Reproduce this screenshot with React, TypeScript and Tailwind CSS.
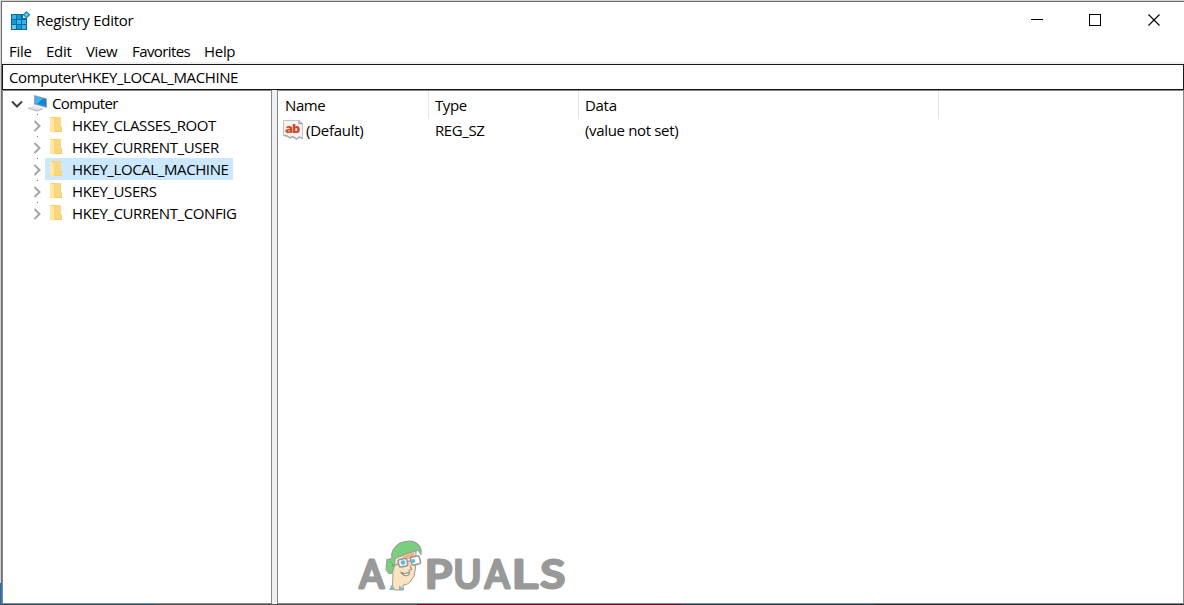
import React from 'react';

const menus = [
  { label: 'File', style: 'w-[37px] tracking-[-0.3px]' },
  { label: 'Edit', style: 'w-[40px] tracking-[-0.3px]' },
  { label: 'View', style: 'w-[46px] tracking-[-0.4px]' },
  { label: 'Favorites', style: 'w-[72px] tracking-[-0.6px]' },
  { label: 'Help', style: 'w-[40px] tracking-[-0.3px]' },
];

const keys = [
  { name: 'HKEY_CLASSES_ROOT' },
  { name: 'HKEY_CURRENT_USER' },
  { name: 'HKEY_LOCAL_MACHINE', selected: true },
  { name: 'HKEY_USERS' },
  { name: 'HKEY_CURRENT_CONFIG' },
];

const RegistryIcon = () => (
  <svg width="20" height="20" viewBox="0 0 20 20" className="shrink-0">
    <path d="M0 3h12v4h4v12H0z" fill="#08699f" />
    <path d="M1 4h4v4H1zM6 9h4v4H6zM11 9h4v4h-4zM11 14h4v4h-4z" fill="#35b5ec" />
    <path d="M6 4h4v4H6zM1 9h4v4H1zM6 14h4v4H6z" fill="#1398d8" />
    <path d="M1 14h4v4H1z" fill="#62cdf5" />
    <path d="M15.5 0l4 3.7-4 3.8-4-3.8z" fill="#2386b4" />
    <path d="M15.5 1.8l2.2 1.9-2.2 2-2.2-2z" fill="#68c6e8" />
  </svg>
);

const ComputerIcon = () => (
  <svg width="20" height="17" viewBox="0 0 20 17" className="shrink-0">
    <path d="M6 0l13 3.4V13L6 9.5z" fill="#8aa5b6" />
    <path d="M7 1.2l11 3v7.3L7 8.4z" fill="#1686d0" />
    <path d="M7 1.2l8 2.2-6 5.6-2-.6z" fill="#43b2f0" />
    <path d="M0 12.7l6-1.8 9 2.5-6 2.7z" fill="#d2d7da" />
    <path d="M0 12.7l9 2.7 6-2v.8L9 16.6l-9-3z" fill="#a8afb3" />
    <path d="M3 12.5l7 2M5 11.800l7 2" stroke="#f5f7f8" strokeWidth=".7" />
  </svg>
);

const FolderIcon = () => (
  <svg width="13" height="17" viewBox="0 0 13 17" className="shrink-0">
    <path d="M0 0h11v9l1 1v5H0z" fill="#f5cc67" />
    <path d="M0 0l4 1.4V16l-4-1.600z" fill="#ffe8a2" />
    <path d="M4 0h7v14H4z" fill="#fad77f" />
  </svg>
);

const StringIcon = () => (
  <svg width="20" height="20" viewBox="0 0 20 20" className="shrink-0">
    <path d="M.5.5h16l3 3v15l-3-1.5-3 2-4-2.5-3 1-3-2.5-3 .5z" fill="#f5f5f5" stroke="#c4c4c4" />
    <path d="M16 .5v3h3.5M1 15.5l3 .5 3 2 3-1.5 3.5 2.5 3-2 3 1.5" fill="none" stroke="#a2a2a2" strokeWidth="1.3" />
    <text x="2" y="13" fontFamily="Open Sans, sans-serif" fontSize="13" fontWeight="800" fill="#d64b2b" textLength="15">ab</text>
  </svg>
);

const Watermark = () => (
  <svg width="230" height="75" viewBox="345 530 230 75" className="absolute left-[345px] top-[530px]">
    <g fill="#999" stroke="#999" strokeWidth="3.2" strokeLinejoin="round" strokeLinecap="round" fontFamily="Lato, sans-serif" fontSize="38" fontWeight="400">
      <text x="359.500" y="588" textLength="24" lengthAdjust="spacingAndGlyphs">A</text>
      <text x="425" y="588" textLength="26.500" lengthAdjust="spacingAndGlyphs">P</text>
      <text x="453.500" y="588" textLength="27.500" lengthAdjust="spacingAndGlyphs">U</text>
      <text x="485" y="588" textLength="24" lengthAdjust="spacingAndGlyphs">A</text>
      <text x="512" y="588" textLength="25" lengthAdjust="spacingAndGlyphs">L</text>
      <text x="540.500" y="588" textLength="24" lengthAdjust="spacingAndGlyphs">S</text>
    </g>
    <path d="M390 566l3 8-.5 12 2 4h9l-.5-5c3 0 5-1 7-3l4-6 1.5-8 .5-17-21 6-2 9z" fill="#fbe3bf" stroke="#a09a92" strokeWidth="1" />
    <path d="M402 557l12-5v5l-7 2z" fill="#ecb187" />
    <path d="M387 559.5l5-1c-2-7 3-12 8-15.500 8-3 15-2 18.500 2 3 3 3 6 2.500 9.500-1-2-2-4-4-4-5-.5-8 2-12 4l-10 4-.5 7-2.500 8h-3l-3-4z" fill="#79cf7c" stroke="#98a298" strokeWidth="1.2" strokeLinejoin="round" />
    <path d="M389.500 562c3 0 4 2 2.500 5" fill="none" stroke="#5daf66" strokeWidth=".8" />
    <rect x="398.500" y="559" width="9" height="7.500" rx="2" fill="#eef4f5" stroke="#8f989e" strokeWidth="1.5" transform="rotate(-12 403 563)" />
    <rect x="411" y="556.500" width="9" height="8" rx="2" fill="#fff" stroke="#8f989e" strokeWidth="1.5" transform="rotate(-12 415.500 560.500)" />
    <circle cx="403" cy="562.500" r="2.300" fill="#65b9d8" />
    <circle cx="413.300" cy="561" r="2" fill="#65b9d8" />
    <path d="M398 564l-6 2M408 561.500l3-.8M410 565.500l1.500 4-3 1" fill="none" stroke="#948f89" strokeWidth="1.1" />
    <path d="M400.500 572c3 2 6 2 9 0 0 4-5 6-9 0z" fill="#fff" stroke="#948f89" strokeWidth="1.1" />
    <path d="M389.500 590l2-4.500 2.500 4.500M399.500 590v-4l4.500 4" fill="#70c3dc" stroke="#89a0a6" strokeWidth=".7" />
  </svg>
);

const App: React.FC = () => {
  return (
    <div className="relative flex h-[605px] w-[1184px] flex-col overflow-hidden bg-white font-['Open_Sans',sans-serif] text-[15px] leading-[22px] tracking-[-0.4px] text-black">
      <div className="h-px shrink-0 bg-[#d5d5d5]" />
      <div className="flex min-h-0 grow">
        <div className="flex w-px shrink-0 flex-col bg-[#d5d5d5]">
          <div className="mt-auto h-[21px] bg-[#0078d7]" />
        </div>
        <div className="flex min-w-0 grow flex-col border-l border-t border-[#6d6d6d]">
          <header className="flex h-[38px] shrink-0 items-center pl-[9px]">
            <RegistryIcon />
            <h1 className="mb-[2px] ml-[5px] tracking-[-0.27px]">Registry Editor</h1>
            <div className="mb-[3px] ml-auto flex items-center">
              <svg width="124" height="14" viewBox="0 0 124 14" fill="none" stroke="#000" shapeRendering="crispEdges">
                <path d="M0 6.5h12M58.5 1.5h11v11h-11z" />
              </svg>
              <svg width="36" height="14" viewBox="0 0 36 14" className="-ml-[7px]" fill="none" stroke="#000" strokeWidth="1.1">
                <path d="M.5 1.5l11 11m0-11l-11 11" />
              </svg>
            </div>
          </header>
          <nav className="flex h-[22px] shrink-0 items-center pl-[7px]">
            {menus.map((menu) => (
              <button key={menu.label} className={`shrink-0 text-left ${menu.style}`}>{menu.label}</button>
            ))}
          </nav>
          <div className="h-[2px] shrink-0 bg-[#f0f0f0]" />
          <div className="flex h-[26px] shrink-0 items-center border border-[#171717] pl-[6px]">
            Computer\HKEY_LOCAL_MACHINE
          </div>
          <main className="flex min-h-0 grow bg-[#f0f0f0]">
            <aside className="w-[270px] shrink-0 border border-[#828790] bg-white pt-[1px]">
              <div className="flex h-[22px] items-center pl-[8px]">
                <svg width="12" height="8" viewBox="0 0 12 8" className="mt-px" fill="none" stroke="#404040" strokeWidth="2">
                  <path d="M1 1.5l5 5 5-5" />
                </svg>
                <div className="ml-[5px]"><ComputerIcon /></div>
                <span className="ml-[4px] tracking-[-0.6px]">Computer</span>
              </div>
              {keys.map((key) => (
                <div key={key.name} className="flex h-[22px] items-center pl-[31px]">
                  <div className="relative h-[22px] w-[11px] shrink-0">
                    <span className="absolute left-[3px] top-0 size-px bg-[#777]" />
                    <svg width="8" height="12" viewBox="0 0 8 12" className="mt-[6px]" fill="none" stroke="#a6a6a6" strokeWidth="2">
                      <path d="M.5 1l5 5-5 5" />
                    </svg>
                  </div>
                  <div className={`flex h-[22px] items-center pl-[5px] pr-[5px] ${key.selected ? 'bg-[#cce8ff]' : ''}`}>
                    <FolderIcon />
                    <span className="ml-[9px] whitespace-nowrap">{key.name}</span>
                  </div>
                </div>
              ))}
            </aside>
            <section className="ml-[5px] min-w-0 grow border border-[#828790] bg-white">
              <div className="flex h-[28px] leading-[29px]">
                <div className="w-[151px] border-r border-[#e5e5e5] pl-[7px]">Name</div>
                <div className="w-[150px] border-r border-[#e5e5e5] pl-[6px]">Type</div>
                <div className="w-[360px] border-r border-[#e5e5e5] pl-[6px] tracking-[-0.3px]">Data</div>
              </div>
              <div className="flex h-[22px] items-center leading-[22px]">
                <div className="flex w-[151px] items-center pl-[5px]">
                  <StringIcon />
                  <span className="ml-[3px] tracking-[-0.28px]">(Default)</span>
                </div>
                <div className="w-[150px] pl-[6px]">REG_SZ</div>
                <div className="pl-[6px] tracking-[-0.34px]">(value not set)</div>
              </div>
            </section>
          </main>
        </div>
      </div>
      <div className="flex h-px shrink-0 bg-[#505050]">
        <div className="w-[154px] bg-[#175674]" />
        <div className="w-[263px] bg-[#505050]" />
        <div className="w-[264px] bg-[#64102d]" />
        <div className="w-[194px] bg-[#184153]" />
        <div className="grow bg-[#202e32]" />
      </div>
      <Watermark />
    </div>
  );
};

export default App;
